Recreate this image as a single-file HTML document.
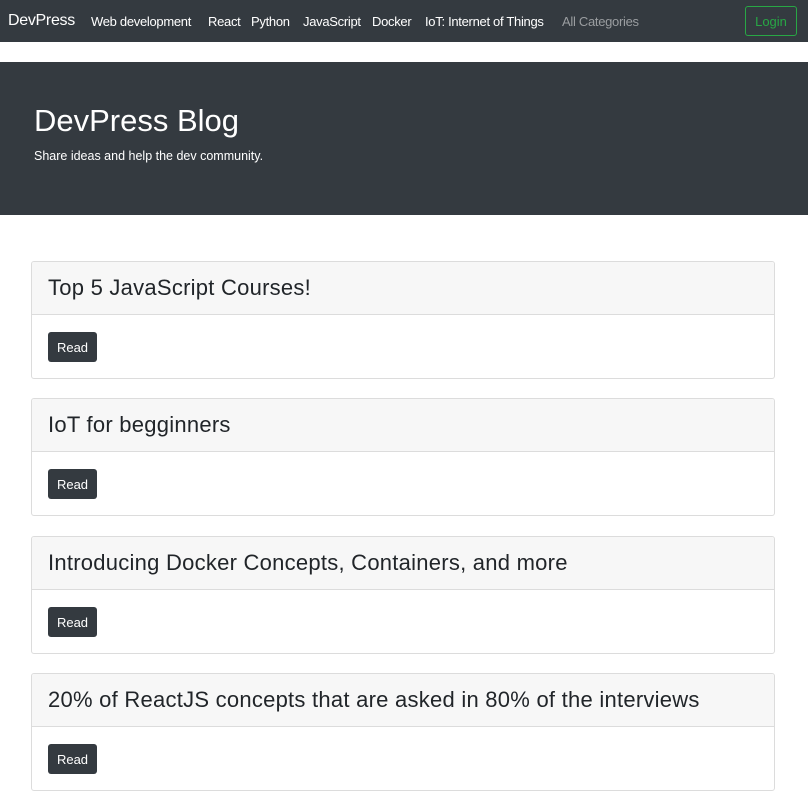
<!DOCTYPE html>
<html><head><style>
*{box-sizing:border-box;margin:0;padding:0}
body{width:808px;height:805px;overflow:hidden;background:#fff;font-family:"Liberation Sans",sans-serif;color:#212529}
.nav{height:42px;background:#343a40;position:relative}
.nav span{position:absolute;top:14px;font-size:13px;color:#fff;letter-spacing:-0.3px}
.brand{left:8px;top:12px!important;font-size:16px!important}
.login{position:absolute;left:745px;top:6px;width:52px;height:30px;border:1px solid #28a745;border-radius:3px;color:#28a745;font-size:13px;text-align:center;line-height:29px}
.hero{position:absolute;top:62px;left:0;width:808px;height:153px;background:#343a40;color:#fff}
.hero h1{position:absolute;left:34px;top:41px;font-size:31px;font-weight:500;letter-spacing:0px}
.hero p{position:absolute;left:34px;top:87px;font-size:12.5px;letter-spacing:0px}
.card{position:absolute;left:31px;width:744px;height:118px;border:1px solid #dcdcdc;border-radius:3px;overflow:hidden}
.card .h{height:53px;background:#f7f7f7;border-bottom:1px solid #dcdcdc;padding-left:16px;font-size:22px;line-height:52px;color:#212529;letter-spacing:0.25px}
.card .b{position:absolute;left:16px;top:70px;width:49px;height:30px;background:#343a40;color:#fff;border-radius:3px;font-size:13px;text-align:center;line-height:31px}
</style></head><body>
<div class="nav">
<span class="brand">DevPress</span>
<span style="left:91px">Web development</span>
<span style="left:208px">React</span>
<span style="left:251px">Python</span>
<span style="left:303px">JavaScript</span>
<span style="left:372px">Docker</span>
<span style="left:425px">IoT: Internet of Things</span>
<span style="left:562px;color:#9a9da0">All Categories</span>
<div class="login">Login</div>
</div>
<div class="hero"><h1>DevPress Blog</h1><p>Share ideas and help the dev community.</p></div>
<div class="card" style="top:261px"><div class="h">Top 5 JavaScript Courses!</div><div class="b">Read</div></div>
<div class="card" style="top:398px"><div class="h">IoT for begginners</div><div class="b">Read</div></div>
<div class="card" style="top:536px"><div class="h">Introducing Docker Concepts, Containers, and more</div><div class="b">Read</div></div>
<div class="card" style="top:673px"><div class="h">20% of ReactJS concepts that are asked in 80% of the interviews</div><div class="b">Read</div></div>
</body></html>
